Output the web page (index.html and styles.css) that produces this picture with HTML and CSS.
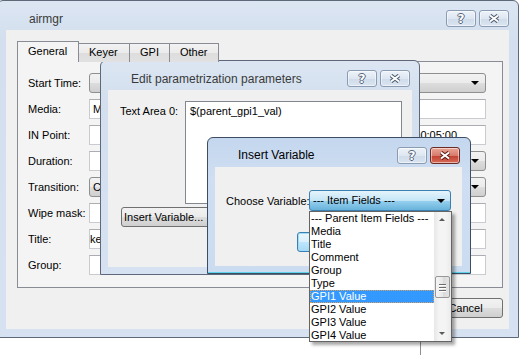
FILE: index.html
```html
<!DOCTYPE html>
<html lang="en">
<head>
    <meta charset="UTF-8">
    <title>airmgr</title>
    <link rel="stylesheet" href="styles.css">
</head>
<body>
<div class="desk">

    <div class="back-win"></div>

    <!-- main window -->
    <section class="win win-main">
        <header class="titlebar">
            <span class="title">airmgr</span>
            <div class="tbtns">
                <span class="tbtn"><span class="q">?</span></span>
                <span class="tbtn"><svg class="x" width="12" height="9" viewBox="0 0 12 9"><path d="M2 1.5 L10 7.5 M10 1.5 L2 7.5" stroke="#4d5c72" stroke-width="4"/><path d="M2 1.5 L10 7.5 M10 1.5 L2 7.5" stroke="#fff" stroke-width="2"/></svg></span>
            </div>
        </header>
        <div class="client main-client">
            <div class="tabs">
                <span class="tab sel">General</span>
                <span class="tab">Keyer</span>
                <span class="tab">GPI</span>
                <span class="tab">Other</span>
            </div>
            <div class="pane">
                <div class="row"><label>Start Time:</label><div class="combo grow"><span class="arrow"></span></div></div>
                <div class="row"><label>Media:</label><div class="edit grow">M</div></div>
                <div class="row"><label>IN Point:</label><div class="edit grow"></div><div class="edit tc">00:00:05:00</div></div>
                <div class="row"><label>Duration:</label><div class="edit grow"></div><div class="combo small"><span class="arrow"></span></div></div>
                <div class="row"><label>Transition:</label><div class="combo grow">Cut<span class="arrow"></span></div></div>
                <div class="row"><label>Wipe mask:</label><div class="edit grow"></div></div>
                <div class="row"><label>Title:</label><div class="edit grow scrolled">ker</div></div>
                <div class="row"><label>Group:</label><div class="edit grow"></div></div>
            </div>
            <div class="btnrow">
                <button class="btn">OK</button>
                <button class="btn">Cancel</button>
            </div>
        </div>
    </section>

    <!-- edit parametrization dialog -->
    <section class="win win-edit">
        <header class="titlebar">
            <span class="title">Edit parametrization parameters</span>
            <div class="tbtns">
                <span class="tbtn"><span class="q">?</span></span>
                <span class="tbtn"><svg class="x" width="12" height="9" viewBox="0 0 12 9"><path d="M2 1.5 L10 7.5 M10 1.5 L2 7.5" stroke="#4d5c72" stroke-width="4"/><path d="M2 1.5 L10 7.5 M10 1.5 L2 7.5" stroke="#fff" stroke-width="2"/></svg></span>
            </div>
        </header>
        <div class="client edit-client">
            <div class="area-row">
                <label>Text Area 0:</label>
                <div class="textarea">$(parent_gpi1_val)</div>
            </div>
            <button class="btn insert-btn">Insert Variable...</button>
        </div>
    </section>

    <!-- insert variable dialog (active) -->
    <section class="win win-insert active">
        <header class="titlebar">
            <span class="title">Insert Variable</span>
            <div class="tbtns">
                <span class="tbtn"><span class="q">?</span></span>
                <span class="tbtn close"><svg class="x" width="12" height="9" viewBox="0 0 12 9"><path d="M2 1.5 L10 7.5 M10 1.5 L2 7.5" stroke="#5a1d18" stroke-width="4"/><path d="M2 1.5 L10 7.5 M10 1.5 L2 7.5" stroke="#fff" stroke-width="2"/></svg></span>
            </div>
        </header>
        <div class="client insert-client">
            <div class="choose-row">
                <label>Choose Variable:</label>
                <div class="combo open grow">--- Item Fields ---<span class="arrow"></span></div>
            </div>
            <div class="btnrow dlg-btns">
                <button class="btn default"></button>
                <button class="btn"></button>
            </div>
        </div>
    </section>

    <!-- open combo popup -->
    <div class="droplist">
        <ul class="items">
            <li>--- Parent Item Fields ---</li>
            <li>Media</li>
            <li>Title</li>
            <li>Comment</li>
            <li>Group</li>
            <li>Type</li>
            <li class="cur">GPI1 Value</li>
            <li>GPI2 Value</li>
            <li>GPI3 Value</li>
            <li>GPI4 Value</li>
        </ul>
        <div class="vscroll">
            <span class="sarrow up"></span>
            <div class="track"><span class="thumb"><i></i><i></i><i></i></span></div>
            <span class="sarrow down"></span>
        </div>
    </div>

</div>
</body>
</html>
```

FILE: styles.css
```css
* {
    box-sizing: border-box;
}

body {
    margin: 0;
    background: #fff;
    font-family: "Liberation Sans", Arial, sans-serif;
    font-size: 11px;
    color: #000;
}

.desk {
    position: relative;
    width: 524px;
    height: 355px;
    overflow: hidden;
    background: #fff;
}

/* window behind, peeking out at the bottom */
.back-win {
    position: absolute;
    left: 420px;
    top: 330px;
    width: 98px;
    height: 40px;
    border-left: 1px solid #8e8e8e;
    border-top: 1px solid #8e8e8e;
    background: #fff;
}

label {
    white-space: nowrap;
}

/* ---- windows (basic theme frames) ---- */
.win {
    position: absolute;
    display: flex;
    flex-direction: column;
    border: 1px solid #5d6878;
    border-radius: 6px 6px 0 0;
    background: linear-gradient(#dce6f3, #d3dfee 40px, #d6e2f1);
    padding: 0 7px 7px 7px;
}

.win.active {
    border-color: #3d4d63;
    background: linear-gradient(#c4d7ee, #cfdef2 40px, #cbdcf1);
    box-shadow: inset 0 -1px 0 #5fd2ec;
}

.win-main {
    left: -3px;
    top: 0;
    width: 522px;
    height: 338px;
    padding: 0 9px 8px 8px;
}

.win-edit {
    left: 100px;
    top: 60px;
    width: 320px;
    height: 215px;
}

.win-insert {
    left: 207px;
    top: 137px;
    width: 264px;
    height: 137px;
    padding-right: 8px;
}

.titlebar {
    height: 29px;
    flex: none;
    display: flex;
    align-items: flex-start;
    justify-content: space-between;
    padding: 9px 2px 0 23px;
}

.win-main .titlebar {
    padding-left: 23px;
    padding-right: 0;
}

.title {
    margin-top: 2px;
    line-height: 15px;
    font-size: 12px;
    color: #3a3a3a;
}

.active .title {
    color: #000;
    margin-top: 1px;
}

.tbtns {
    display: flex;
    gap: 3px;
}

.tbtn {
    width: 30px;
    height: 17px;
    border: 1px solid #8a9bb2;
    border-radius: 3px;
    background: linear-gradient(#eef3f9, #dde6f1 50%, #cfdbea 51%, #dbe5f1);
    display: flex;
    align-items: center;
    justify-content: center;
    box-shadow: inset 0 0 0 1px rgba(255, 255, 255, 0.5);
}

.tbtn.close {
    border-color: #6b2a23;
    background: linear-gradient(#e9a597, #d77c6c 50%, #c2402f 51%, #d66c59);
}

.tbtn .q {
    font-family: "DejaVu Sans", sans-serif;
    font-weight: bold;
    font-size: 12px;
    line-height: 12px;
    color: #fff;
    text-shadow: 1px 0 0 #55647a, -1px 0 0 #55647a, 0 1px 0 #55647a, 0 -1px 0 #55647a;
}

.client {
    flex: 1;
    background: #f0f0f0;
    display: flex;
    flex-direction: column;
}

/* ---- main window content ---- */
.main-client {
    padding: 11px 0 0 11px;
}

.tabs {
    display: flex;
    align-items: flex-end;
    height: 21px;
    position: relative;
    z-index: 1;
}

.tab {
    height: 19px;
    padding: 0 10px;
    border: 1px solid #898c95;
    border-bottom: none;
    margin-right: -1px;
    background: linear-gradient(#f2f2f2, #ebebeb 50%, #dddddd 51%, #e1e1e1);
    line-height: 17px;
}

.tab:nth-child(2) { width: 52px; }
.tab:nth-child(3) { width: 41px; }
.tab:nth-child(4) { width: 50px; }

.tab.sel {
    height: 21px;
    width: 62px;
    background: #f4f4f4;
    line-height: 19px;
    padding-left: 10px;
}

.pane {
    width: 486px;
    height: 227px;
    margin-top: -1px;
    border: 1px solid #898c95;
    background: #f4f4f4;
    padding: 11px 16px 0 10px;
    display: flex;
    flex-direction: column;
    gap: 6px;
}

.row {
    display: flex;
    align-items: center;
    height: 20px;
}

.row label {
    width: 61px;
    flex: none;
}

.grow {
    flex: 1;
}

.edit {
    height: 20px;
    background: #fff;
    border: 1px solid #c9cbd0;
    border-top-color: #abadb3;
    padding: 0 3px;
    line-height: 18px;
    white-space: nowrap;
    overflow: hidden;
}

.edit.tc {
    width: 91px;
    flex: none;
}

.edit.scrolled {
    padding-left: 0;
}

.combo {
    position: relative;
    height: 20px;
    border: 1px solid #8e8f8f;
    border-radius: 3px;
    background: linear-gradient(#f2f2f2, #ebebeb 50%, #dddddd 51%, #cfcfcf);
    padding: 0 3px;
    line-height: 18px;
    white-space: nowrap;
}

.combo.small {
    width: 70px;
    flex: none;
}

.arrow {
    position: absolute;
    right: 6px;
    top: 7px;
    border-left: 4px solid transparent;
    border-right: 4px solid transparent;
    border-top: 4px solid #000;
}

.btnrow {
    display: flex;
    justify-content: flex-end;
    gap: 6px;
    margin-top: 10px;
    width: 486px;
}

.btn {
    width: 75px;
    height: 20px;
    border: 1px solid #707070;
    border-radius: 3px;
    background: linear-gradient(#f2f2f2, #ebebeb 50%, #dddddd 51%, #cfcfcf);
    font-family: "Liberation Sans", Arial, sans-serif;
    font-size: 11px;
    padding: 0;
    color: #000;
}

.btn.default {
    border-color: #3c7fb1;
    box-shadow: inset 0 0 0 1px #9fdcf7;
    background: linear-gradient(#eaf6fd, #d9f0fc 50%, #bee6fd 51%, #a7d9f5);
}

/* ---- edit parametrization dialog ---- */
.edit-client {
    padding: 11px 10px 0 12px;
}

.area-row {
    display: flex;
    align-items: flex-start;
}

.area-row label {
    width: 65px;
    flex: none;
    padding-top: 4px;
}

.textarea {
    flex: 1;
    height: 103px;
    background: #fff;
    border: 1px solid #828790;
    padding: 3px 4px;
}

.insert-btn {
    margin: 3px 0 0 1px;
    width: 92px;
    text-align: left;
    padding-left: 2px;
}

/* ---- insert variable dialog ---- */
.insert-client {
    padding: 23px 11px 0 11px;
}

.choose-row {
    display: flex;
    align-items: center;
}

.choose-row label {
    width: 83px;
    flex: none;
}

.combo.open {
    height: 21px;
    border-color: #3c7fb1;
    background: linear-gradient(#e5f4fc, #c4e5f6 50%, #98d1ef 51%, #68b3db);
    line-height: 19px;
    padding-left: 3px;
}

.combo.open .arrow {
    right: 5px;
    top: 8px;
}

.dlg-btns {
    width: auto;
    gap: 4px;
    margin-top: 21px;
}

/* ---- popup list ---- */
.droplist {
    position: absolute;
    left: 309px;
    top: 211px;
    width: 143px;
    height: 131px;
    border: 1px solid #646464;
    background: #fff;
    display: flex;
    box-shadow: 3px 3px 3px rgba(0, 0, 0, 0.35);
}

.items {
    list-style: none;
    margin: 0;
    padding: 0;
    flex: 1;
}

.items li {
    height: 13px;
    line-height: 13px;
    padding-left: 1px;
    white-space: nowrap;
}

.items li.cur {
    background: #3399ff;
    color: #fff;
    outline: 1px dotted #d9a060;
    outline-offset: -1px;
}

.vscroll {
    width: 17px;
    flex: none;
    display: flex;
    flex-direction: column;
    background: linear-gradient(90deg, #e7e7e7, #f4f4f4 30%, #f4f4f4 70%, #eaeaea);
}

.sarrow {
    height: 17px;
    position: relative;
}

.sarrow::after {
    content: "";
    position: absolute;
    left: 5px;
    top: 6px;
    border-left: 3px solid transparent;
    border-right: 3px solid transparent;
}

.sarrow.up::after {
    border-bottom: 3px solid #5a5a5a;
}

.sarrow.down::after {
    top: 8px;
    border-top: 3px solid #5a5a5a;
}

.track {
    flex: 1;
    padding: 47px 1px 0;
}

.thumb {
    display: flex;
    flex-direction: column;
    align-items: center;
    justify-content: center;
    gap: 2px;
    height: 22px;
    border: 1px solid #979797;
    border-radius: 2px;
    background: linear-gradient(90deg, #f5f5f5, #e8e8e8 50%, #d9d9d9 51%, #e3e3e3);
}

.thumb i {
    display: block;
    width: 7px;
    height: 1px;
    background: #6c6c6c;
    box-shadow: 0 1px 0 #fff;
}
```
